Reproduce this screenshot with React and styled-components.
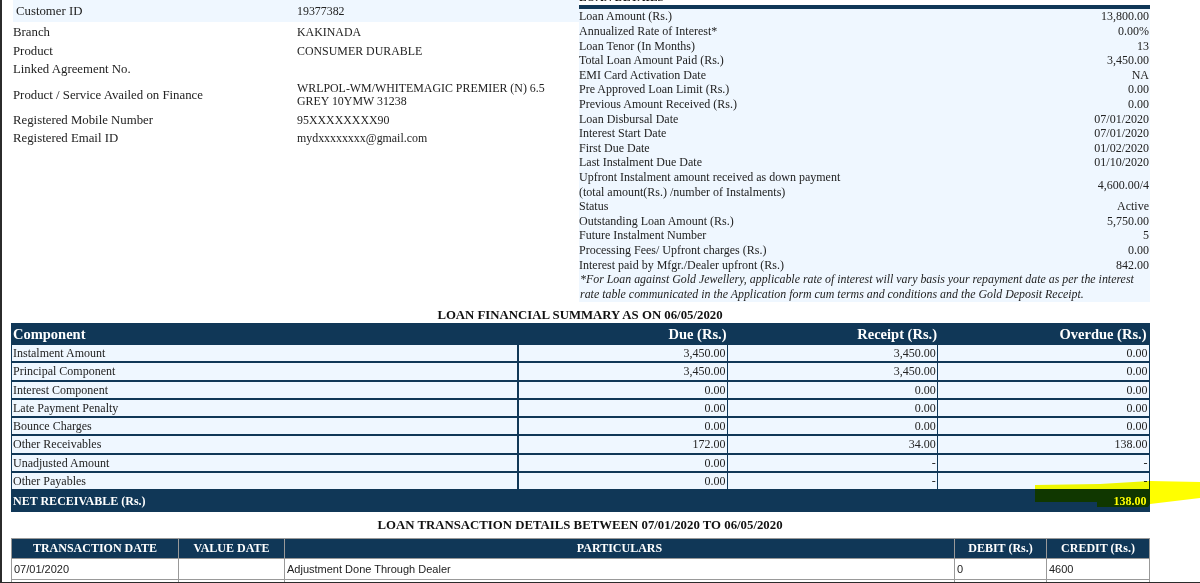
import React from "react";
import styled, { createGlobalStyle } from "styled-components";

const customerRows = [
  { label: "Branch", value: "KAKINADA", height: 20 },
  { label: "Product", value: "CONSUMER DURABLE", height: 18 },
  { label: "Linked Agreement No.", value: "", height: 19 },
  {
    label: "Product / Service Availed on Finance",
    value: "WRLPOL-WM/WHITEMAGIC PREMIER (N) 6.5 GREY 10YMW 31238",
    height: 32,
  },
  { label: "Registered Mobile Number", value: "95XXXXXXXX90", height: 18 },
  { label: "Registered Email ID", value: "mydxxxxxxxx@gmail.com", height: 18 },
];

const loanRows = [
  ["Loan Amount (Rs.)", "13,800.00"],
  ["Annualized Rate of Interest*", "0.00%"],
  ["Loan Tenor (In Months)", "13"],
  ["Total Loan Amount Paid (Rs.)", "3,450.00"],
  ["EMI Card Activation Date", "NA"],
  ["Pre Approved Loan Limit (Rs.)", "0.00"],
  ["Previous Amount Received (Rs.)", "0.00"],
  ["Loan Disbursal Date", "07/01/2020"],
  ["Interest Start Date", "07/01/2020"],
  ["First Due Date", "01/02/2020"],
  ["Last Instalment Due Date", "01/10/2020"],
];

const loanRowsAfter = [
  ["Status", "Active"],
  ["Outstanding Loan Amount (Rs.)", "5,750.00"],
  ["Future Instalment Number", "5"],
  ["Processing Fees/ Upfront charges (Rs.)", "0.00"],
  ["Interest paid by Mfgr./Dealer upfront (Rs.)", "842.00"],
];

const summaryRows = [
  ["Instalment Amount", "3,450.00", "3,450.00", "0.00"],
  ["Principal Component", "3,450.00", "3,450.00", "0.00"],
  ["Interest Component", "0.00", "0.00", "0.00"],
  ["Late Payment Penalty", "0.00", "0.00", "0.00"],
  ["Bounce Charges", "0.00", "0.00", "0.00"],
  ["Other Receivables", "172.00", "34.00", "138.00"],
  ["Unadjusted Amount", "0.00", "-", "-"],
  ["Other Payables", "0.00", "-", "-"],
];

const App = () => (
  <>
    <GlobalStyle />
    <Page>
      <TopSection>
        <CustomerPanel>
          <CustomerHead>
            <CustomerLabel>Customer ID</CustomerLabel>
            <CustomerValue>19377382</CustomerValue>
          </CustomerHead>
          {customerRows.map((row) => (
            <CustomerRow key={row.label} $height={row.height}>
              <CustomerLabel>{row.label}</CustomerLabel>
              <CustomerValue>{row.value}</CustomerValue>
            </CustomerRow>
          ))}
        </CustomerPanel>
        <LoanPanel>
          <ClippedTitle>
            <span>LOAN DETAILS</span>
          </ClippedTitle>
          <LoanBar />
          {loanRows.map(([label, value]) => (
            <LoanRow key={label}>
              <span>{label}</span>
              <span>{value}</span>
            </LoanRow>
          ))}
          <UpfrontRow>
            <span>
              Upfront Instalment amount received as down payment
              <br />
              (total amount(Rs.) /number of Instalments)
            </span>
            <span>4,600.00/4</span>
          </UpfrontRow>
          {loanRowsAfter.map(([label, value]) => (
            <LoanRow key={label}>
              <span>{label}</span>
              <span>{value}</span>
            </LoanRow>
          ))}
          <LoanNote>
            *For Loan against Gold Jewellery, applicable rate of interest will vary basis your
            repayment date as per the interest rate table communicated in the Application form cum
            terms and conditions and the Gold Deposit Receipt.
          </LoanNote>
        </LoanPanel>
      </TopSection>

      <SummaryTitle>LOAN FINANCIAL SUMMARY AS ON 06/05/2020</SummaryTitle>
      <SummaryTable>
        <SummaryHead>
          <span>Component</span>
          <HeadAmount>Due (Rs.)</HeadAmount>
          <HeadAmount>Receipt (Rs.)</HeadAmount>
          <HeadAmount>Overdue (Rs.)</HeadAmount>
        </SummaryHead>
        {summaryRows.map(([name, due, receipt, overdue]) => (
          <SummaryRow key={name}>
            <SummaryCell>{name}</SummaryCell>
            <SummaryCell $right>{due}</SummaryCell>
            <SummaryCell $right>{receipt}</SummaryCell>
            <SummaryCell $right>{overdue}</SummaryCell>
          </SummaryRow>
        ))}
        <NetRow>
          <span>NET RECEIVABLE (Rs.)</span>
          <span>138.00</span>
        </NetRow>
      </SummaryTable>

      <TransactionTitle>LOAN TRANSACTION DETAILS BETWEEN 07/01/2020 TO 06/05/2020</TransactionTitle>
      <TransactionTable>
        <TransactionHead>TRANSACTION DATE</TransactionHead>
        <TransactionHead>VALUE DATE</TransactionHead>
        <TransactionHead>PARTICULARS</TransactionHead>
        <TransactionHead>DEBIT (Rs.)</TransactionHead>
        <TransactionHead>CREDIT (Rs.)</TransactionHead>
        <TransactionCell>07/01/2020</TransactionCell>
        <TransactionCell />
        <TransactionCell>Adjustment Done Through Dealer</TransactionCell>
        <TransactionCell>0</TransactionCell>
        <TransactionCell>4600</TransactionCell>
        <TransactionCell />
        <TransactionCell />
        <TransactionCell />
        <TransactionCell />
        <TransactionCell />
      </TransactionTable>

      <Highlighter viewBox="0 0 165 28" aria-hidden="true">
        <path d="M0 4 L65 3 L115 0 L165 1 V17 L115 23 L113 26 H62 V21 H0 Z" fill="#ffff00" />
      </Highlighter>
    </Page>
  </>
);

export default App;

const GlobalStyle = createGlobalStyle`
  html, body {
    margin: 0;
    padding: 0;
    background: #fff;
  }
`;

const Page = styled.div`
  position: relative;
  box-sizing: border-box;
  width: 1200px;
  height: 583px;
  padding-left: 9px;
  overflow: hidden;
  background: #fff;
  border-left: 2px solid #2b2b2b;
  border-bottom: 1px solid #2b2b2b;
  color: #222;
  font-family: "Liberation Serif", "Times New Roman", serif;
  font-size: 12px;
`;

const TopSection = styled.div`
  display: grid;
  grid-template-columns: 566px 571px;
  width: 1137px;
  height: 302px;
  margin-left: 2px;
`;

const CustomerPanel = styled.div`
  display: flex;
  flex-direction: column;
`;

const CustomerHead = styled.div`
  display: grid;
  grid-template-columns: 281px 1fr;
  align-items: center;
  height: 22px;
  padding-left: 3px;
  background: #eff7ff;
`;

const CustomerRow = styled.div`
  display: grid;
  grid-template-columns: 284px 1fr;
  align-items: center;
  height: ${(p) => p.$height}px;
`;

const CustomerLabel = styled.span`
  font-size: 12.8px;
`;

const CustomerValue = styled.span`
  width: 262px;
  font-size: 11.9px;
  line-height: 13px;
`;

const LoanPanel = styled.div`
  display: flex;
  flex-direction: column;
  background: linear-gradient(#fff 9px, #eff7ff 9px);
`;

const ClippedTitle = styled.div`
  display: flex;
  align-items: flex-end;
  height: 3px;
  overflow: hidden;
  font-size: 11.4px;
  font-weight: 700;
  color: #111;

  span {
    line-height: 12px;
  }
`;

const LoanBar = styled.div`
  height: 4px;
  margin: 2px 0 0.5px;
  background: #103757;
`;

const LoanRow = styled.div`
  display: flex;
  justify-content: space-between;
  align-items: center;
  height: 14.62px;
  padding-right: 1px;
`;

const UpfrontRow = styled(LoanRow)`
  height: 29.24px;
  line-height: 14.6px;
`;

const LoanNote = styled.div`
  padding: 0 8px 0 1px;
  font-size: 11.9px;
  font-style: italic;
  line-height: 14.4px;
`;

const SummaryTitle = styled.div`
  width: 1138px;
  height: 21px;
  padding-top: 5px;
  box-sizing: border-box;
  text-align: center;
  font-size: 12.8px;
  font-weight: 700;
  line-height: 16px;
  color: #111;
`;

const SummaryTable = styled.div`
  display: flex;
  flex-direction: column;
  width: 1138.5px;
  background: #103757;
`;

const SummaryHead = styled.div`
  display: grid;
  grid-template-columns: 505px 208.5px 210.5px 1fr;
  align-items: center;
  height: 22px;
  padding: 0 3px 0 2px;
  box-sizing: border-box;
  color: #fff;
  font-size: 14.5px;
  font-weight: 700;
`;

const HeadAmount = styled.span`
  text-align: right;
`;

const SummaryRow = styled.div`
  display: grid;
  grid-template-columns: 505px 208px 208.5px 1fr;
  column-gap: 1.6px;
  height: 16.25px;
  margin: 0 1px 2px;
`;

const SummaryCell = styled.div`
  padding: 0 1px;
  background: #eff7ff;
  line-height: 16px;
  text-align: ${(p) => (p.$right ? "right" : "left")};
`;

const NetRow = styled.div`
  display: flex;
  justify-content: space-between;
  align-items: center;
  height: 22px;
  margin-top: -1px;
  padding: 0 3px 0 2px;
  color: #fff;
  font-size: 12px;
  font-weight: 700;
`;

const TransactionTitle = styled.div`
  width: 1138px;
  height: 26px;
  padding-top: 5px;
  box-sizing: border-box;
  text-align: center;
  font-size: 12.8px;
  font-weight: 700;
  line-height: 16px;
  color: #111;
`;

const TransactionTable = styled.div`
  display: grid;
  grid-template-columns: 167px 106px 670px 92px 103px;
  grid-template-rows: 20px 21px 21px;
  width: 1138.5px;
  box-sizing: border-box;
  border-top: 1px solid #999;
  border-left: 1px solid #999;
`;

const TransactionHead = styled.div`
  display: flex;
  align-items: center;
  justify-content: center;
  border-right: 1px solid #999;
  border-bottom: 1px solid #999;
  background: #103757;
  color: #fff;
  font-weight: 700;
`;

const TransactionCell = styled.div`
  display: flex;
  align-items: center;
  padding-left: 2px;
  border-right: 1px solid #999;
  border-bottom: 1px solid #999;
  background: #fff;
  font-family: "Liberation Sans", Arial, sans-serif;
  font-size: 11px;
`;

const Highlighter = styled.svg`
  position: absolute;
  left: 1033px;
  top: 481px;
  width: 165px;
  height: 28px;
  mix-blend-mode: multiply;
`;
